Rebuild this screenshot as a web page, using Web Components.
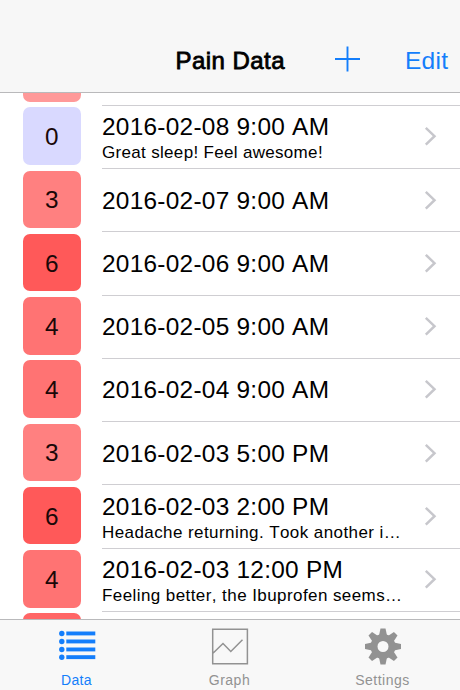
<!DOCTYPE html>
<html lang="en">
<head>
<meta charset="utf-8">
<title>Pain Data</title>
<style>
body { margin: 0; background: #fff; font-family: "Liberation Sans", Arial, sans-serif; font-kerning: none; color: #000; }
</style>
</head>
<body>
<pain-app></pain-app>
<script>
const define = (name, html, setup) => customElements.define(name, class extends HTMLElement {
  connectedCallback() {
    if (this.shadowRoot) return;
    const t = document.createElement('template');
    t.innerHTML = html;
    this.attachShadow({ mode: 'open' }).append(t.content.cloneNode(true));
    if (setup) setup(this, this.shadowRoot);
  }
});

define('nav-bar', `
<style>
:host { display: flex; box-sizing: border-box; height: 93px; flex: none; padding: 28px 12px 0 175.5px; background: #f7f7f7; border-bottom: 1px solid #b9b9bb; align-items: center; }
h1 { margin: 0; width: 158.5px; font-size: 24px; line-height: 28px; padding-top: 2px; font-weight: 400; letter-spacing: .45px; -webkit-text-stroke: .8px #000; white-space: nowrap; }
svg { display: block; flex: none; }
.edit { margin-left: auto; color: #147efb; font-size: 24.5px; line-height: 28px; padding-top: 2px; letter-spacing: .3px; margin-right: -.3px; }
</style>
<h1><slot></slot></h1>
<svg width="27" height="30" viewBox="0 0 27 30"><path d="M1 14H26M13.5 1.5V26.5" stroke="#147efb" stroke-width="1.9" fill="none"/></svg>
<span class="edit">Edit</span>`);

define('pain-badge', `
<style>
:host { display: flex; box-sizing: border-box; width: 57.5px; height: 57.5px; flex: none; border-radius: 7px; align-items: center; justify-content: center; font-size: 24.3px; line-height: 28px; padding-top: 2px; color: #1a0808; background: var(--tone); }
</style><slot></slot>`);

define('pain-row', `
<style>
:host { display: flex; box-sizing: border-box; height: 63.25px; flex: none; padding-left: 23px; align-items: center; }
pain-badge { margin-bottom: 2.6px; }
.body { display: flex; flex: 1; align-self: stretch; box-sizing: border-box; margin-left: 21.5px; padding-right: 23px; border-bottom: 1px solid #cfced2; align-items: center; justify-content: space-between; }
.text { white-space: nowrap; }
.date { font-size: 24.4px; line-height: 28px; letter-spacing: .27px; padding-top: 1px; }
.note { font-size: 17px; line-height: 22px; margin-top: 1px; letter-spacing: var(--note-spacing, .42px); }
.text.noted { padding-top: 4px; }
.noted .date { padding-top: 0; }
svg { display: block; margin-top: -1px; }
</style>
<pain-badge></pain-badge>
<div class="body"><div class="text"><div class="date"><slot></slot></div></div>
<svg width="13" height="20" viewBox="0 0 13 20"><path d="M1.8 1.8L10.5 10.2L1.8 18.6" fill="none" stroke="#c7c7cc" stroke-width="2.5"/></svg></div>`,
(host, root) => {
  const badge = root.querySelector('pain-badge');
  badge.textContent = host.getAttribute('level');
  badge.style.setProperty('--tone', host.getAttribute('tone'));
  if (host.hasAttribute('note')) {
    const note = document.createElement('div');
    note.className = 'note';
    note.textContent = host.getAttribute('note');
    const text = root.querySelector('.text');
    text.classList.add('noted');
    text.append(note);
  }
});

define('tab-item', `
<style>
:host { display: flex; flex: 0 0 153px; flex-direction: column; align-items: center; color: #929292; font-size: 14px; line-height: 18px; letter-spacing: .5px; }
:host([selected]) { color: #147efb; letter-spacing: .3px; }
.icon { display: flex; height: 37px; margin: 8px 0 6px; }
</style>
<div class="icon"><slot name="icon"></slot></div><span><slot></slot></span>`);

define('tab-bar', `
<style>
:host { display: flex; box-sizing: border-box; height: 71px; flex: none; border-top: 1px solid #b9b9bb; background: #f8f8f8; }
svg { display: block; }
</style>
<tab-item selected>
  <svg slot="icon" width="38" height="37" viewBox="0 0 38 37" fill="#147efb"><g id="lines"></g></svg>Data
</tab-item>
<tab-item>
  <svg slot="icon" width="38" height="37" viewBox="0 0 38 37" fill="none" stroke="#929292" stroke-width="1.5"><path d="M1.7 1.2H36.4V35.8H1.7ZM1.7 25.5L12 15.5L19.8 23.5L31.5 11.8"/></svg>Graph
</tab-item>
<tab-item>
  <svg slot="icon" width="38" height="37" viewBox="-19 -18.5 38 37" fill="#929292"><circle r="9" fill="none" stroke="#929292" stroke-width="7"/><g id="teeth"></g></svg>Settings
</tab-item>`,
(host, root) => {
  root.getElementById('lines').innerHTML = [6, 14, 22, 29.7].map(y =>
    `<circle cx="3.8" cy="${y - .5}" r="2.7"/><rect x="8.3" y="${y - 2.5}" width="29" height="3.9"/>`).join('');
  root.getElementById('teeth').innerHTML = [0, 45, 90, 135, 180, 225, 270, 315].map(a =>
    `<path d="M-4 -11L-2.5 -18H2.5L4 -11Z" transform="rotate(${a})"/>`).join('');
});

define('pain-app', `
<style>
:host { display: flex; flex-direction: column; width: 460px; height: 690px; overflow: hidden; }
.list { flex: 1; min-height: 0; overflow: hidden; display: flex; flex-direction: column; }
.list pain-row:first-child { margin-top: -50.4px; }
</style>
<nav-bar>Pain Data</nav-bar>
<div class="list">
<pain-row tone="#ff9999"></pain-row>
<pain-row level="0" tone="#d9d9ff" note="Great sleep! Feel awesome!" style="--note-spacing:.32px">2016-02-08 9:00 AM</pain-row>
<pain-row level="3" tone="#ff8080">2016-02-07 9:00 AM</pain-row>
<pain-row level="6" tone="#ff5959">2016-02-06 9:00 AM</pain-row>
<pain-row level="4" tone="#ff7373">2016-02-05 9:00 AM</pain-row>
<pain-row level="4" tone="#ff7373">2016-02-04 9:00 AM</pain-row>
<pain-row level="3" tone="#ff8080">2016-02-03 5:00 PM</pain-row>
<pain-row level="6" tone="#ff5959" note="Headache returning. Took another i…">2016-02-03 2:00 PM</pain-row>
<pain-row level="4" tone="#ff7373" note="Feeling better, the Ibuprofen seems…">2016-02-03 12:00 PM</pain-row>
<pain-row tone="#ff6666"></pain-row>
</div>
<tab-bar></tab-bar>`);
</script>
</body>
</html>
